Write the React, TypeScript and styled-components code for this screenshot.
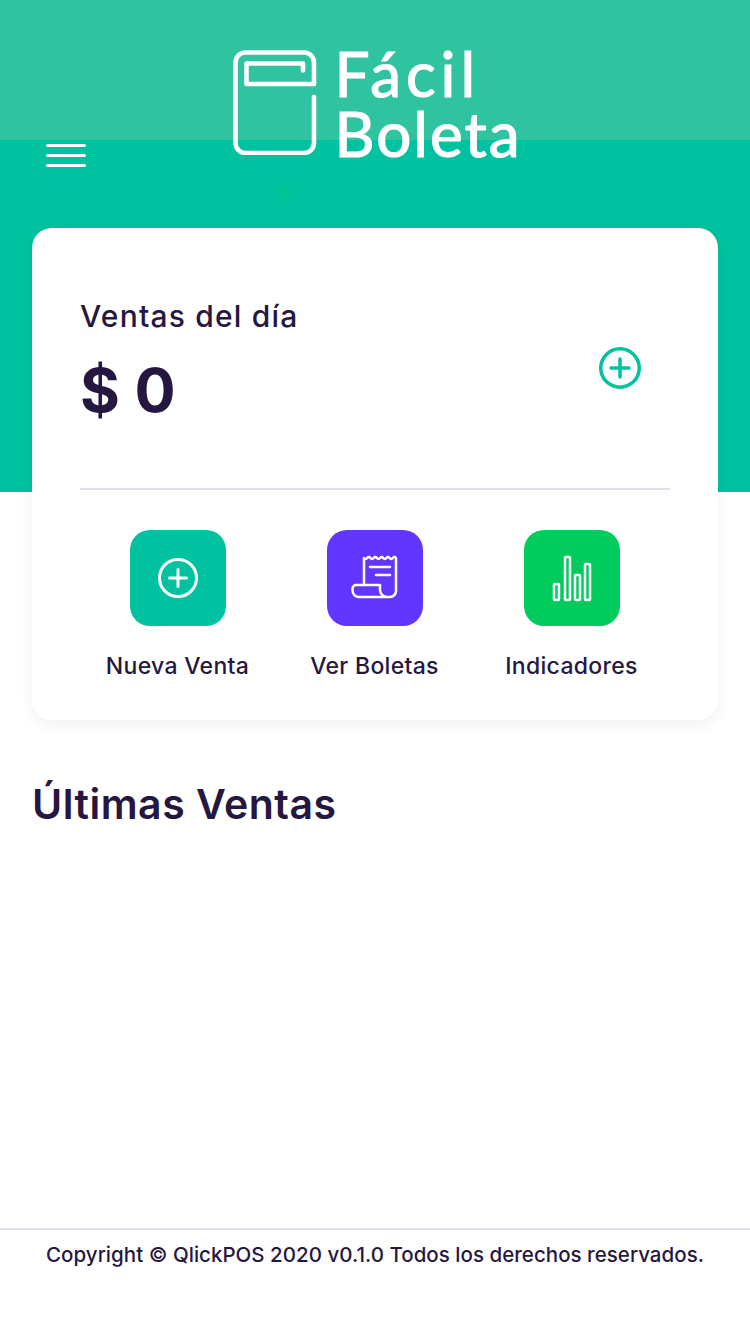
import React from "react";
import styled, { createGlobalStyle } from "styled-components";

const Global = createGlobalStyle`
  html, body { margin: 0; padding: 0; background: #fff; }
  * { box-sizing: border-box; }
  body { font-family: "Inter", "Noto Sans", sans-serif; color: #261740; }
`;

const Page = styled.div`
  position: relative;
  width: 750px;
  height: 1334px;
  display: flex;
  flex-direction: column;
  background:
    linear-gradient(#30c3a0 0 140px, transparent 140px),
    linear-gradient(#00c2a0 0 492px, #fff 492px);
`;

const TopBar = styled.header`
  height: 228px;
  display: grid;
  grid-template-columns: 1fr auto 1fr;
  padding: 50px 46px 0;
`;

const Burger = styled.button`
  justify-self: start;
  width: 40px;
  height: 23px;
  margin-top: 94px;
  padding: 0;
  border: 0;
  background: none;
  display: flex;
  flex-direction: column;
  justify-content: space-between;
`;

const BurgerLine = styled.span`
  display: block;
  height: 3px;
  border-radius: 2px;
  background: #fff;
`;

const Logo = styled.div`
  display: flex;
  gap: 18px;
  align-self: start;
  padding-left: 4px;
`;

const LogoMark = styled.svg`
  width: 84px;
  height: 105px;
  display: block;
  flex: none;
  color: #fff;
`;

const LogoText = styled.div`
  font-family: "Lato", sans-serif;
  font-weight: 400;
  font-size: 62px;
  line-height: 60px;
  color: #fff;
  margin-top: -7px;
  -webkit-text-stroke: 1.2px #fff;
`;

const LogoLine = styled.div<{ $spacing: number }>`
  letter-spacing: ${(p) => p.$spacing}px;
`;

const Smudge = styled.span`
  position: absolute;
  left: 277px;
  top: 187px;
  width: 13px;
  height: 14px;
  border-radius: 60% 60% 50% 50%;
  background: #00c595;
  filter: blur(1px);
`;

const Card = styled.section`
  width: 686px;
  height: 492px;
  margin-left: 32px;
  padding: 72px 48px 0;
  background: #fff;
  border-radius: 20px;
  box-shadow: 0 4px 14px rgba(38, 23, 64, 0.07);
  display: flex;
  flex-direction: column;
`;

const Summary = styled.div`
  height: 190px;
  display: flex;
  justify-content: space-between;
  border-bottom: 2px solid #dfe0eb;
`;

const SummaryLabel = styled.div`
  font-size: 30px;
  line-height: 33px;
  font-weight: 500;
  letter-spacing: 1.2px;
`;

const SummaryValue = styled.div`
  font-size: 61px;
  line-height: 70px;
  font-weight: 700;
  margin-top: 22px;
`;

const SummaryAdd = styled.svg`
  width: 44px;
  height: 44px;
  margin: 46px 28px 0 0;
  color: #00c2a0;
  display: block;
`;

const Actions = styled.div`
  display: grid;
  grid-template-columns: repeat(3, 197px);
  margin: 40px 0 0 -1px;
`;

const Action = styled.div`
  display: flex;
  flex-direction: column;
  align-items: center;
`;

const ActionIcon = styled.div<{ $bg: string }>`
  width: 96px;
  height: 96px;
  border-radius: 20px;
  background: ${(p) => p.$bg};
  color: #fff;
  display: flex;
  align-items: center;
  justify-content: center;
`;

const ActionLabel = styled.div`
  margin-top: 27px;
  font-size: 23px;
  line-height: 27px;
  font-weight: 500;
  letter-spacing: 0.3px;
  white-space: nowrap;
`;

const SectionTitle = styled.h2`
  margin: 60px 0 0 32px;
  font-size: 41px;
  line-height: 48px;
  font-weight: 600;
  letter-spacing: 0.5px;
`;

const Footer = styled.footer`
  margin-top: auto;
  margin-bottom: 66px;
  border-top: 2px solid #dfe0eb;
  padding-top: 12px;
  font-size: 20.5px;
  line-height: 26px;
  font-weight: 500;
  letter-spacing: 0.03px;
  text-align: center;
  white-space: nowrap;
`;

export default function App() {
  return (
    <Page>
      <Global />
      <TopBar>
        <Burger aria-label="Menú">
          <BurgerLine />
          <BurgerLine />
          <BurgerLine />
        </Burger>
        <Logo>
          <LogoMark viewBox="0 0 84 105" fill="none" stroke="currentColor" strokeWidth="4.6" strokeLinecap="round" strokeLinejoin="round">
            <path d="M81 47v46a10 10 0 0 1-10 10H12.500a10 10 0 0 1-10-10V12.500a10 10 0 0 1 10-10H71a10 10 0 0 1 10 10V34H13.500V13.500H70v7" />
          </LogoMark>
          <LogoText>
            <LogoLine $spacing={5}>Fácil</LogoLine>
            <LogoLine $spacing={2}>Boleta</LogoLine>
          </LogoText>
        </Logo>
        <span />
      </TopBar>
      <Smudge />
      <Card>
        <Summary>
          <div>
            <SummaryLabel>Ventas del día</SummaryLabel>
            <SummaryValue>$ 0</SummaryValue>
          </div>
          <SummaryAdd viewBox="0 0 44 44" fill="none" stroke="currentColor" strokeWidth="3.500" strokeLinecap="round">
            <circle cx="22" cy="22" r="19.250" />
            <path d="M22 13v18M13 22h18" />
          </SummaryAdd>
        </Summary>
        <Actions>
          <Action>
            <ActionIcon $bg="#00c2a0">
              <svg width="42" height="42" viewBox="0 0 42 42" fill="none" stroke="currentColor" strokeWidth="3" strokeLinecap="round">
                <circle cx="21" cy="21" r="18.500" />
                <path d="M21 12.500v17M12.500 21h17" />
              </svg>
            </ActionIcon>
            <ActionLabel>Nueva Venta</ActionLabel>
          </Action>
          <Action>
            <ActionIcon $bg="#6236ff">
              <svg width="48" height="48" viewBox="0 0 48 48" fill="none" stroke="currentColor" strokeWidth="2.500" strokeLinecap="round" strokeLinejoin="round">
                <path d="M13 31V4q1.600 2 3.200 0t3.200 0 3.200 0 3.200 0 3.200 0 3.200 0 3.200 0 3.200 0 3.200 0 3.200 0V37a6 6 0 0 1-6 6" />
                <path d="M19 13h20M25 21h14" />
                <path d="M39 43H8a6.500 6.500 0 0 1-6.500-6.500v-2A3.500 3.500 0 0 1 5 31h24v5a7 7 0 0 0 7 7z" />
              </svg>
            </ActionIcon>
            <ActionLabel>Ver Boletas</ActionLabel>
          </Action>
          <Action>
            <ActionIcon $bg="#00cb5d">
              <svg width="42" height="48" viewBox="0 0 42 48" fill="none" stroke="currentColor" strokeWidth="2.500" strokeLinejoin="round">
                <rect x="3" y="30" width="5" height="16" rx="1" />
                <rect x="14" y="3" width="5" height="43" rx="1" />
                <rect x="24" y="21" width="5" height="25" rx="1" />
                <rect x="34" y="10" width="5" height="36" rx="1" />
              </svg>
            </ActionIcon>
            <ActionLabel>Indicadores</ActionLabel>
          </Action>
        </Actions>
      </Card>
      <SectionTitle>Últimas Ventas</SectionTitle>
      <Footer>Copyright © QlickPOS 2020 v0.1.0 Todos los derechos reservados.</Footer>
    </Page>
  );
}
